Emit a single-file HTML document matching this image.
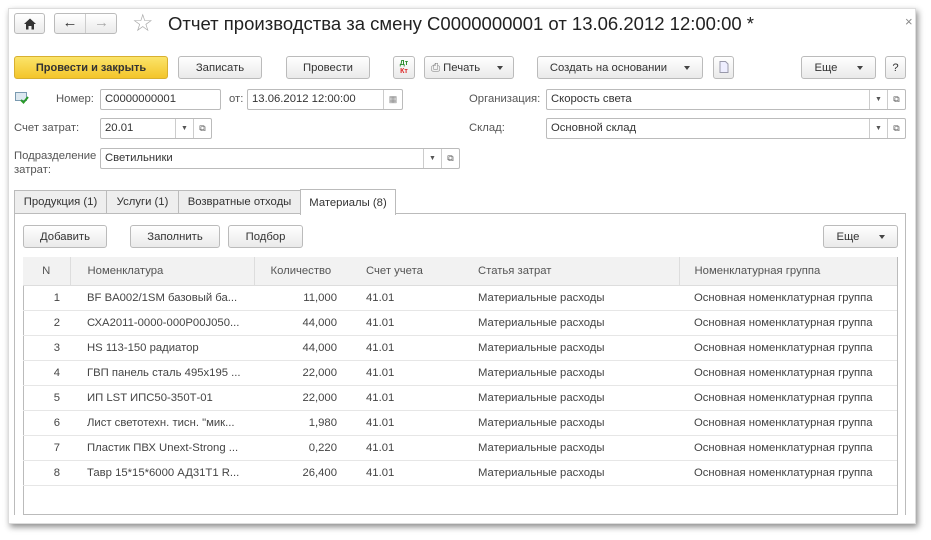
<!DOCTYPE html>
<html><head><meta charset="utf-8"><style>
*{box-sizing:border-box;margin:0;padding:0}
body{width:931px;height:540px;background:#fff;font-family:"Liberation Sans",Arial,sans-serif;font-size:11.3px;color:#333;position:relative;overflow:hidden}
.win{position:absolute;left:8px;top:8px;width:908px;height:516px;background:#fff;box-shadow:2px 3px 6px rgba(0,0,0,.45);border:1px solid #ddd}
.a{position:absolute}
.btn{position:absolute;height:23px;border:1px solid #bbb;border-radius:3px;background:linear-gradient(#fff,#eaeaea);text-align:center;line-height:22px;color:#333;font-size:11.3px}
.inp{position:absolute;height:21px;border:1px solid #bbb;border-radius:2px;background:#fff;line-height:19px;padding-left:4px;color:#333}
.dd{position:absolute;top:0;width:18px;height:19px;border-left:1px solid #ccc;text-align:center;font-size:7px;color:#555}
.lbl{position:absolute;color:#555}
.tab{position:absolute;top:190px;height:24px;border:1px solid #bbb;background:#eee;line-height:23px;text-align:center;color:#333}
.tri{display:inline-block;width:0;height:0;border-left:3.5px solid transparent;border-right:3.5px solid transparent;border-top:4px solid #444;vertical-align:middle}
table{border-collapse:collapse;position:absolute;left:23px;top:257px;width:874px}
td{height:25px;border-bottom:1px solid #e6e6e6;color:#444;white-space:nowrap}
th{height:28px;background:#f2f2f2;font-weight:normal;color:#555;text-align:left;border-bottom:1px solid #ddd}
</style></head><body>
<div class="win"></div>
<div class="btn" style="left:14px;top:13px;width:31px;height:21px"><svg width="14" height="14" viewBox="0 0 14 14" style="margin-top:3px"><path d="M1 7L7 1.5L13 7H11V12.5H8.5V9H5.5V12.5H3V7Z" fill="#333"/></svg></div>
<div class="btn" style="left:54px;top:13px;width:63px;height:21px"><span style="position:absolute;left:0;width:31px;border-right:1px solid #ccc;height:19px;font-size:15px;line-height:18px;font-weight:bold">&#8592;</span><span style="position:absolute;left:31px;width:31px;font-size:15px;line-height:18px;color:#aaa">&#8594;</span></div>
<div class="a" style="left:132px;top:9px;font-size:24px;color:#aaa">&#9734;</div>
<div class="a" style="left:168px;top:13px;font-size:18.5px;color:#222">Отчет производства за смену С0000000001 от 13.06.2012 12:00:00 *</div>
<div class="a" style="left:905px;top:14px;font-size:13px;color:#888">×</div>

<div class="btn" style="left:14px;top:56px;width:154px;background:linear-gradient(#fbe46a,#f3c52a);border-color:#d8b030;font-weight:bold;color:#333;font-size:11px">Провести и закрыть</div>
<div class="btn" style="left:178px;top:56px;width:84px">Записать</div>
<div class="btn" style="left:286px;top:56px;width:84px">Провести</div>
<div class="btn" style="left:393px;top:56px;width:22px;font-size:7px;line-height:8px;font-weight:bold;padding-top:3px"><span style="color:#2a8a2a">Дт</span><br><span style="color:#d22">Кт</span></div>
<div class="btn" style="left:424px;top:56px;width:90px;text-align:left;padding-left:6px"><span style="color:#777">&#9113;</span> Печать <span class="tri" style="margin-left:14px"></span></div>
<div class="btn" style="left:537px;top:56px;width:166px">Создать на основании <span class="tri" style="margin-left:14px"></span></div>
<div class="btn" style="left:713px;top:56px;width:21px"><svg width="10" height="12" viewBox="0 0 10 12" style="margin-top:4px"><path d="M1 .5H6.5L9 3V11.5H1Z" fill="#eef" stroke="#99a"/></svg></div>
<div class="btn" style="left:801px;top:56px;width:75px">Еще <span class="tri" style="margin-left:16px"></span></div>
<div class="btn" style="left:885px;top:56px;width:21px">?</div>

<svg class="a" style="left:15px;top:92px" width="14" height="12"><rect x="0.5" y="0.5" width="11" height="8" fill="#dde8f0" stroke="#7a9ab0"/><path d="M6 8l2.5 2.5L13 5" stroke="#2a9a2a" stroke-width="2" fill="none"/></svg>
<div class="lbl" style="left:56px;top:93px">Номер:</div>
<div class="inp" style="left:100px;top:89px;width:121px">С0000000001</div>
<div class="lbl" style="left:229px;top:93px">от:</div>
<div class="inp" style="left:247px;top:89px;width:156px">13.06.2012 12:00:00<div class="dd" style="right:0;width:19px;font-size:9px;line-height:18px;color:#888">&#9638;</div></div>
<div class="lbl" style="left:469px;top:93px">Организация:</div>
<div class="inp" style="left:546px;top:89px;width:360px">Скорость света<div class="dd" style="right:18px;line-height:19px">&#9660;</div><div class="dd" style="right:0;line-height:19px;font-size:9px">&#10697;</div></div>

<div class="lbl" style="left:14px;top:122px">Счет затрат:</div>
<div class="inp" style="left:100px;top:118px;width:112px">20.01<div class="dd" style="right:18px;line-height:19px">&#9660;</div><div class="dd" style="right:0;line-height:19px;font-size:9px">&#10697;</div></div>
<div class="lbl" style="left:469px;top:122px">Склад:</div>
<div class="inp" style="left:546px;top:118px;width:360px">Основной склад<div class="dd" style="right:18px;line-height:19px">&#9660;</div><div class="dd" style="right:0;line-height:19px;font-size:9px">&#10697;</div></div>

<div class="lbl" style="left:14px;top:149px;line-height:14px">Подразделение<br>затрат:</div>
<div class="inp" style="left:100px;top:148px;width:360px">Светильники<div class="dd" style="right:18px;line-height:19px">&#9660;</div><div class="dd" style="right:0;line-height:19px;font-size:9px">&#10697;</div></div>

<div class="a" style="left:14px;top:213px;width:892px;height:302px;border:1px solid #bbb;border-bottom:none"></div>
<div class="tab" style="left:14px;width:93px">Продукция (1)</div>
<div class="tab" style="left:106px;width:73px">Услуги (1)</div>
<div class="tab" style="left:178px;width:123px">Возвратные отходы</div>
<div class="tab" style="left:300px;top:189px;width:96px;height:26px;background:#fff;border-bottom:none;line-height:26px">Материалы (8)</div>

<div class="btn" style="left:23px;top:225px;width:84px">Добавить</div>
<div class="btn" style="left:130px;top:225px;width:90px">Заполнить</div>
<div class="btn" style="left:228px;top:225px;width:75px">Подбор</div>
<div class="btn" style="left:823px;top:225px;width:75px">Еще <span class="tri" style="margin-left:16px"></span></div>

<div class="a" style="left:23px;top:257px;width:875px;height:258px;border:1px solid #bbb"></div>
<table>
<tr><th style="width:47px;text-align:center;border-right:1px solid #ddd">N</th><th style="width:184px;padding-left:17px;border-right:1px solid #ddd">Номенклатура</th><th style="width:112px;padding-left:16px">Количество</th><th style="width:112px;padding-left:0">Счет учета</th><th style="width:201px;padding-left:0;border-right:1px solid #ddd">Статья затрат</th><th style="padding-left:15px">Номенклатурная группа</th></tr>
<tr><td style="text-align:right;padding-right:10px">1</td><td style="padding-left:17px">BF BA002/1SM базовый ба...</td><td style="text-align:right;padding-right:29px">11,000</td><td>41.01</td><td>Материальные расходы</td><td style="padding-left:15px">Основная номенклатурная группа</td></tr>
<tr><td style="text-align:right;padding-right:10px">2</td><td style="padding-left:17px">СХА2011-0000-000P00J050...</td><td style="text-align:right;padding-right:29px">44,000</td><td>41.01</td><td>Материальные расходы</td><td style="padding-left:15px">Основная номенклатурная группа</td></tr>
<tr><td style="text-align:right;padding-right:10px">3</td><td style="padding-left:17px">HS 113-150 радиатор</td><td style="text-align:right;padding-right:29px">44,000</td><td>41.01</td><td>Материальные расходы</td><td style="padding-left:15px">Основная номенклатурная группа</td></tr>
<tr><td style="text-align:right;padding-right:10px">4</td><td style="padding-left:17px">ГВП панель сталь 495x195 ...</td><td style="text-align:right;padding-right:29px">22,000</td><td>41.01</td><td>Материальные расходы</td><td style="padding-left:15px">Основная номенклатурная группа</td></tr>
<tr><td style="text-align:right;padding-right:10px">5</td><td style="padding-left:17px">ИП LST ИПС50-350Т-01</td><td style="text-align:right;padding-right:29px">22,000</td><td>41.01</td><td>Материальные расходы</td><td style="padding-left:15px">Основная номенклатурная группа</td></tr>
<tr><td style="text-align:right;padding-right:10px">6</td><td style="padding-left:17px">Лист светотехн. тисн. "мик...</td><td style="text-align:right;padding-right:29px">1,980</td><td>41.01</td><td>Материальные расходы</td><td style="padding-left:15px">Основная номенклатурная группа</td></tr>
<tr><td style="text-align:right;padding-right:10px">7</td><td style="padding-left:17px">Пластик ПВХ Unext-Strong ...</td><td style="text-align:right;padding-right:29px">0,220</td><td>41.01</td><td>Материальные расходы</td><td style="padding-left:15px">Основная номенклатурная группа</td></tr>
<tr><td style="text-align:right;padding-right:10px">8</td><td style="padding-left:17px">Тавр 15*15*6000 АД31Т1 R...</td><td style="text-align:right;padding-right:29px">26,400</td><td>41.01</td><td>Материальные расходы</td><td style="padding-left:15px">Основная номенклатурная группа</td></tr>
</table>
</body></html>
